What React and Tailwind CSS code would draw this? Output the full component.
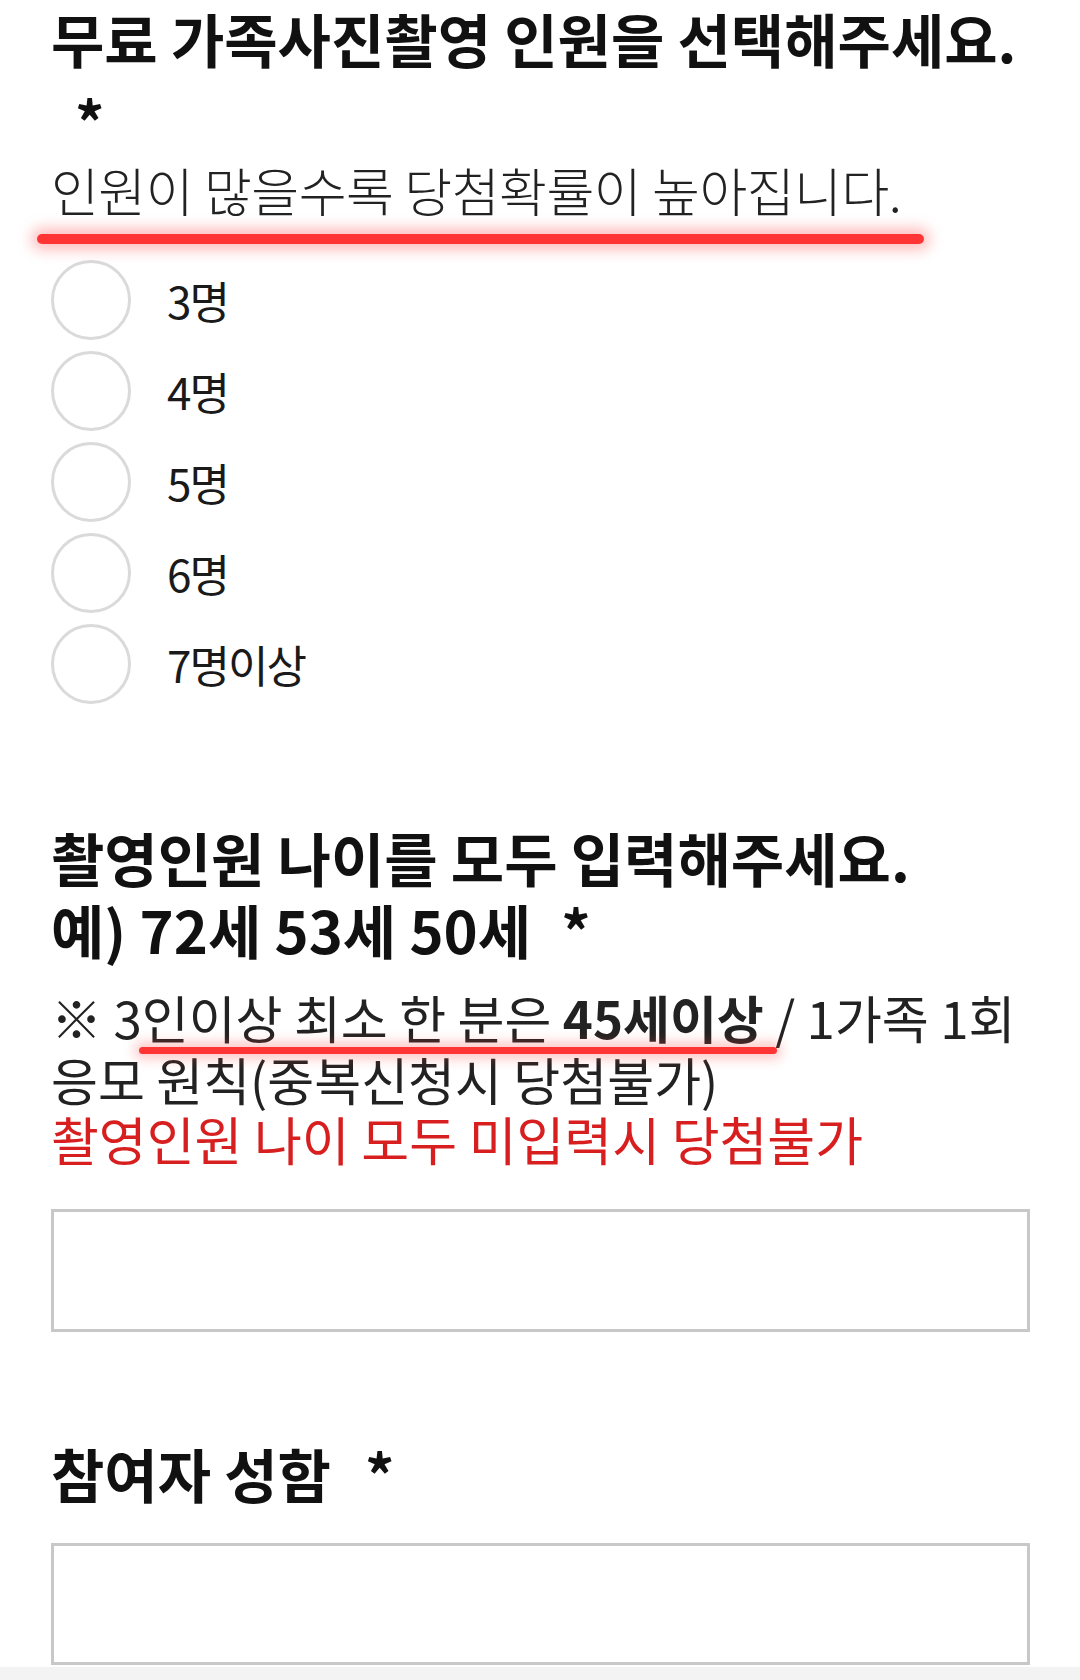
import React, { useState } from "react";

const options = ["3명", "4명", "5명", "6명", "7명이상"];

function RadioRow({ label, checked, onSelect }) {
  return (
    <label className="flex h-[91px] items-center cursor-pointer" onClick={onSelect}>
      <span className="flex h-[80px] w-[80px] shrink-0 items-center justify-center rounded-full border-[3px] border-[#dadada] bg-white">
        {checked && <span className="h-[40px] w-[40px] rounded-full bg-[#673ab7]" />}
      </span>
      <span className="ml-[36px] text-[44px] leading-[50px] tracking-[-2px] text-[#1a1a1a]">{label}</span>
    </label>
  );
}

function App() {
  const [count, setCount] = useState(null);
  const [ages, setAges] = useState("");
  const [name, setName] = useState("");

  return (
    <div className="flex min-h-[1680px] flex-col bg-white font-['Noto_Sans_CJK_KR','Noto_Sans',sans-serif] text-[#111]">
      <div className="pl-[51px] pr-[50px]">
        {/* 촬영 인원 선택 */}
        <h2 className="text-[58px] font-bold leading-[76px]">
          <div className="whitespace-nowrap">무료 가족사진촬영 인원을 선택해주세요.</div>
          <div className="pl-[24px] pt-[6px]">*</div>
        </h2>
        <div className="relative mt-[2px]">
          <p className="text-[52px] font-light leading-[60px] tracking-[-0.5px] text-[#222]">
            인원이 많을수록 당첨확률이 높아집니다.
          </p>
          <div className="absolute left-[-14px] top-[74px] h-[10px] w-[887px] rounded-full bg-[#ff3434] shadow-[0_0_14px_6px_rgba(255,70,70,0.35)]" />
        </div>
        <div className="mt-[34px] flex flex-col">
          {options.map((opt, i) => (
            <RadioRow key={opt} label={opt} checked={count === i} onSelect={() => setCount(i)} />
          ))}
        </div>

        {/* 나이 입력 */}
        <h2 className="mt-[112px] text-[58px] font-bold leading-[72px]">
          촬영인원 나이를 모두 입력해주세요.
          <br />
          예) 72세 53세 50세<span className="ml-[30px]">*</span>
        </h2>
        <div className="relative mt-[21px]">
          <p className="text-[51px] leading-[62px] text-[#222]">
            ※ 3인이상 최소 한 분은 <b className="font-bold">45세이상</b> / 1가족 1회 응모 원칙(중복신청시 당첨불가)
          </p>
          <div className="absolute left-[88px] top-[61px] h-[7px] w-[638px] rounded-full bg-[#ff3434] shadow-[0_0_12px_5px_rgba(255,70,70,0.3)]" />
        </div>
        <p className="text-[52px] leading-[58px] text-[#d71f1f]">
          촬영인원 나이 모두 미입력시 당첨불가
        </p>
        <input
          type="text"
          value={ages}
          onChange={(e) => setAges(e.target.value)}
          className="mt-[41px] block h-[123px] w-full border-[3px] border-[#c8c8c8] bg-white px-4 text-[40px] outline-none"
        />

        {/* 성함 */}
        <h2 className="mt-[105px] text-[58px] font-bold leading-[72px]">
          참여자 성함<span className="ml-[34px]">*</span>
        </h2>
        <input
          type="text"
          value={name}
          onChange={(e) => setName(e.target.value)}
          className="mt-[34px] block h-[122px] w-full border-[3px] border-[#c8c8c8] bg-white px-4 text-[40px] outline-none"
        />
      </div>
      <div className="mt-auto h-[13px] bg-[#f3f3f3]" />
    </div>
  );
}

export default App;
